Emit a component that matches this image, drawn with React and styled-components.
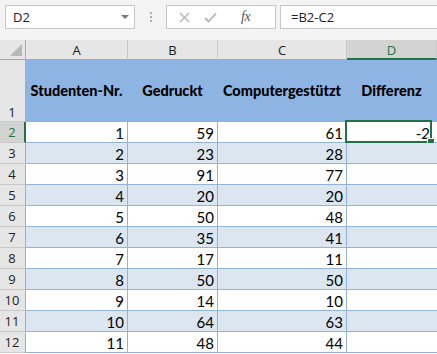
import React from 'react';
import styled, { createGlobalStyle, css } from 'styled-components';

const GlobalStyle = createGlobalStyle`
  html, body { margin: 0; padding: 0; background: #ffffff; }
  * { box-sizing: border-box; }
`;

const Page = styled.div`
  width: 437px;
  height: 354px;
  overflow: hidden;
  background: #ffffff;
  font-family: Lato, "Open Sans", sans-serif;
`;

// Formelleiste
const Toolbar = styled.div`
  height: 40px;
  background: #f3f3f3;
  display: flex;
  align-items: flex-start;
  padding: 5px 0 0 5px;
`;

const NameBox = styled.div`
  width: 130px;
  height: 24px;
  background: #fff;
  border: 1px solid #c6c6c6;
  display: flex;
  align-items: center;
  justify-content: space-between;
  padding: 0 5px 0 7px;
  font-family: "Open Sans", sans-serif;
  font-size: 13px;
  color: #222;
`;

const Caret = styled.span`
  width: 0;
  height: 0;
  border-left: 4px solid transparent;
  border-right: 4px solid transparent;
  border-top: 4px solid #777;
`;

const Dots = styled.div`
  width: 31px;
  height: 24px;
  display: flex;
  flex-direction: column;
  align-items: center;
  justify-content: center;
  gap: 2px;
  span {
    width: 2px;
    height: 2px;
    background: #b0b0b0;
  }
`;

const ActionBox = styled.div`
  width: 110px;
  height: 24px;
  background: #fff;
  border: 1px solid #c6c6c6;
  display: flex;
  align-items: center;
  padding-left: 12px;
  gap: 14px;
`;

const Fx = styled.span`
  margin-left: 10px;
  font-family: "Liberation Serif", serif;
  font-style: italic;
  font-size: 14px;
  color: #555;
  letter-spacing: -0.5px;
`;

const FormulaBox = styled.div`
  flex: 1;
  height: 24px;
  margin-left: 4px;
  background: #fff;
  border: 1px solid #c6c6c6;
  border-right: none;
  display: flex;
  align-items: center;
  padding-left: 10px;
  font-family: "Open Sans", sans-serif;
  font-size: 13px;
  color: #222;
`;

// Tabelle
const Sheet = styled.div`
  display: grid;
  grid-template-columns: 26px 102px 90px 129px 1fr;
  grid-template-rows: 20px 62px repeat(11, 21px);
`;

const Corner = styled.div`
  background: #e6e6e6;
  border-right: 1px solid #ababab;
  border-bottom: 1px solid #ababab;
  position: relative;
  &::after {
    content: '';
    position: absolute;
    right: 3px;
    bottom: 3px;
    border-left: 12px solid transparent;
    border-bottom: 12px solid #b7b7b7;
  }
`;

const ColHead = styled.div`
  background: ${p => (p.$active ? '#d3d3d3' : '#e6e6e6')};
  color: ${p => (p.$active ? '#217346' : '#222')};
  border-right: 1px solid #c9c9c9;
  border-bottom: ${p => (p.$active ? '2px solid #217346' : '1px solid #ababab')};
  display: flex;
  align-items: center;
  justify-content: center;
  font-family: "Open Sans", sans-serif;
  font-size: 13px;
  padding-top: ${p => (p.$active ? '1px' : '0')};
`;

const RowHead = styled.div`
  background: ${p => (p.$active ? '#d3d3d3' : '#e6e6e6')};
  color: ${p => (p.$active ? '#217346' : '#222')};
  border-right: ${p => (p.$active ? '2px solid #217346' : '1px solid #ababab')};
  border-bottom: 1px solid #c9c9c9;
  display: flex;
  align-items: ${p => (p.$bottom ? 'flex-end' : 'center')};
  justify-content: center;
  padding-right: ${p => (p.$active ? '0' : '1px')};
  font-family: "Open Sans", sans-serif;
  font-size: 13px;
`;

const TitleCell = styled.div`
  background: #8db4e2;
  border-right: 1px solid #8db4e2;
  border-bottom: 1px solid #95b3d7;
  display: flex;
  align-items: center;
  justify-content: center;
  font-weight: 900;
  font-size: 14.5px;
  color: #000;
  white-space: nowrap;
`;

const Cell = styled.div`
  position: relative;
  background: ${p => (p.$striped ? '#dce6f1' : '#ffffff')};
  border-right: 1px solid #95b3d7;
  border-bottom: 1px solid #95b3d7;
  display: flex;
  align-items: center;
  justify-content: flex-end;
  padding: 1px 3px 0 0;
  font-size: 15px;
  color: #000;
  ${p => p.$last && css`border-right: none;`}
`;

const Selection = styled.div`
  position: absolute;
  left: -2px;
  top: -2px;
  width: 87px;
  height: 23px;
  border: 2px solid #217346;
  pointer-events: none;
  &::after {
    content: '';
    position: absolute;
    right: -5px;
    bottom: -5px;
    width: 6px;
    height: 6px;
    background: #217346;
    border: 1px solid #fff;
  }
`;

const rows = [
  [1, 59, 61],
  [2, 23, 28],
  [3, 91, 77],
  [4, 20, 20],
  [5, 50, 48],
  [6, 35, 41],
  [7, 17, 11],
  [8, 50, 50],
  [9, 14, 10],
  [10, 64, 63],
  [11, 48, 44],
];

const CrossIcon = () => (
  <svg width="11" height="11" viewBox="0 0 11 11">
    <path d="M1 1 L10 10 M10 1 L1 10" stroke="#b4b4b4" strokeWidth="1.4" fill="none" />
  </svg>
);

const CheckIcon = () => (
  <svg width="13" height="11" viewBox="0 0 13 11">
    <path d="M1 6 L4.5 9.5 L12 1.5" stroke="#b4b4b4" strokeWidth="1.8" fill="none" />
  </svg>
);

export default function App() {
  return (
    <Page>
      <GlobalStyle />
      <Toolbar>
        <NameBox>
          D2
          <Caret />
        </NameBox>
        <Dots>
          <span />
          <span />
          <span />
        </Dots>
        <ActionBox>
          <CrossIcon />
          <CheckIcon />
          <Fx>fx</Fx>
        </ActionBox>
        <FormulaBox>=B2-C2</FormulaBox>
      </Toolbar>

      <Sheet>
        <Corner />
        <ColHead>A</ColHead>
        <ColHead>B</ColHead>
        <ColHead>C</ColHead>
        <ColHead $active>D</ColHead>

        <RowHead $bottom>1</RowHead>
        <TitleCell>Studenten-Nr.</TitleCell>
        <TitleCell>Gedruckt</TitleCell>
        <TitleCell>Computergestützt</TitleCell>
        <TitleCell>Differenz</TitleCell>

        {rows.map(([a, b, c], i) => {
          const striped = i % 2 === 1;
          const first = i === 0;
          return (
            <React.Fragment key={a}>
              <RowHead $active={first}>{i + 2}</RowHead>
              <Cell $striped={striped}>{a}</Cell>
              <Cell $striped={striped}>{b}</Cell>
              <Cell $striped={striped}>{c}</Cell>
              <Cell $striped={striped} $last>
                {first && (
                  <>
                    <span style={{ paddingRight: 4 }}>-2</span>
                    <Selection />
                  </>
                )}
              </Cell>
            </React.Fragment>
          );
        })}
      </Sheet>
    </Page>
  );
}
